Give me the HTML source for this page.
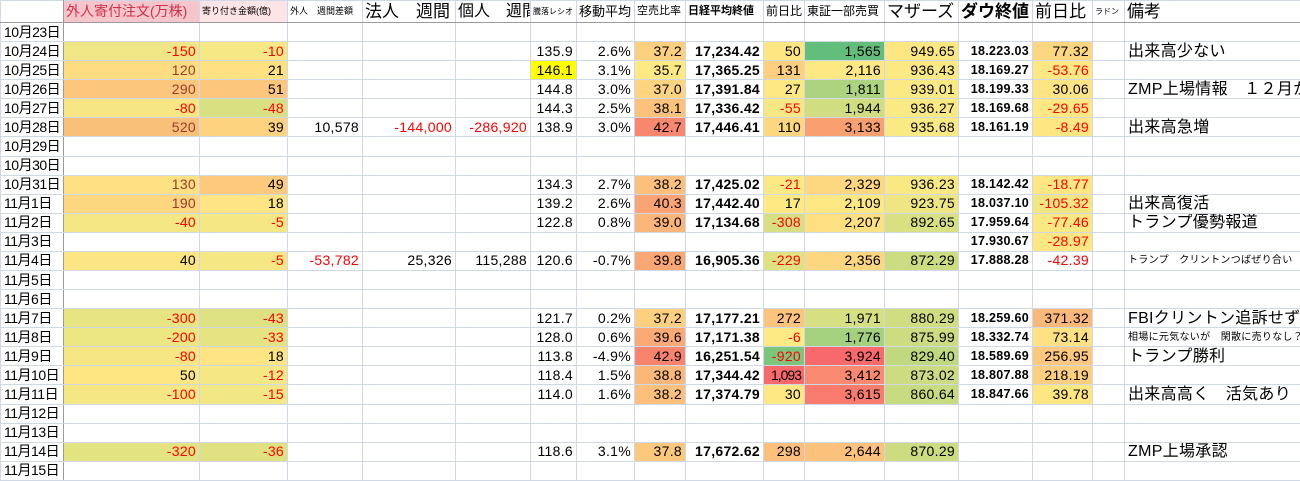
<!DOCTYPE html>
<html><head><meta charset="utf-8">
<style>
body{margin:0;background:#fff;width:1300px;height:470px;overflow:hidden;font-family:"Liberation Sans","Noto Sans CJK JP",sans-serif;}
table{border-collapse:collapse;table-layout:fixed;position:absolute;left:0;top:0;width:1300px;}
td{box-sizing:border-box;border:1px solid #d0d7e5;height:19.08px;padding:0 3px;font-size:14px;text-align:right;white-space:nowrap;overflow:hidden;color:#000;line-height:17px;letter-spacing:0.3px}
tr.h td{height:22px;border-bottom:1px solid #9b9b9b;text-align:left;padding:0 2px;letter-spacing:0}
td.d{text-align:left;border-right:1px solid #9b9b9b;padding-left:3px;letter-spacing:-0.5px}
td.r{color:#ff0000}
td.br{color:#9c3a2a}
td.b{font-weight:bold}
td.m{font-weight:bold;font-size:12.5px}
td.t{text-align:left;font-size:16px;padding-left:3px}
td.s{text-align:left;font-size:10px;padding-left:3px}
</style></head><body>
<table>
<colgroup><col style="width:63px"><col style="width:136px"><col style="width:88px"><col style="width:75px"><col style="width:93px"><col style="width:75px"><col style="width:46px"><col style="width:58px"><col style="width:51px"><col style="width:78px"><col style="width:41px"><col style="width:80px"><col style="width:74px"><col style="width:74px"><col style="width:60px"><col style="width:32px"><col style="width:176px"></colgroup>
<tr class="h"><td class="d"></td><td style="background:#f4c6cc;color:#d03048;font-size:14px">外人寄付注文(万株)</td><td style="background:#fde4e7;font-size:9px">寄り付き金額(億)</td><td style="font-size:9px">外人　週間差額</td><td style="font-size:17px">法人　週間</td><td style="font-size:16px">個人　週間</td><td style="font-size:8px">騰落レシオ</td><td style="font-size:13px">移動平均</td><td style="font-size:11px">空売比率</td><td style="font-size:11px;font-weight:bold">日経平均終値</td><td style="font-size:12px">前日比</td><td style="font-size:12px">東証一部売買</td><td style="font-size:17px">マザーズ</td><td style="font-size:17px;font-weight:bold">ダウ終値</td><td style="font-size:17px">前日比</td><td style="font-size:8px">ラドン</td><td style="font-size:17px">備考</td></tr>
<tr><td class="d">10月23日</td><td></td><td></td><td></td><td></td><td></td><td></td><td></td><td></td><td></td><td></td><td></td><td></td><td></td><td></td><td></td><td></td></tr>
<tr><td class="d">10月24日</td><td class="r" style="background:#f0e685">-150</td><td class="r" style="background:#f6e884">-10</td><td></td><td></td><td></td><td>135.9</td><td>2.6%</td><td style="background:#fdd07f">37.2</td><td class="b">17,234.42</td><td style="background:#fee683">50</td><td style="background:#63be7b">1,565</td><td style="background:#fde783">949.65</td><td class="m">18.223.03</td><td style="background:#fdd780">77.32</td><td></td><td class="t">出来高少ない</td></tr>
<tr><td class="d">10月25日</td><td class="br" style="background:#fedc81">120</td><td style="background:#fee282">21</td><td></td><td></td><td></td><td style="background:#ffff00">146.1</td><td>3.1%</td><td style="background:#fee983">35.7</td><td class="b">17,365.25</td><td style="background:#fcd07f">131</td><td style="background:#fee883">2,116</td><td style="background:#fbe983">936.43</td><td class="m">18.169.27</td><td class="r" style="background:#fde883">-53.76</td><td></td><td></td></tr>
<tr><td class="d">10月26日</td><td class="br" style="background:#fcc77d">290</td><td style="background:#fcc77d">51</td><td></td><td></td><td></td><td>144.8</td><td>3.0%</td><td style="background:#fed481">37.0</td><td class="b">17,391.84</td><td style="background:#fee883">27</td><td style="background:#acd37f">1,811</td><td style="background:#fbe983">939.01</td><td class="m">18.199.33</td><td style="background:#fee483">30.06</td><td></td><td class="t">ZMP上場情報　１２月か</td></tr>
<tr><td class="d">10月27日</td><td class="r" style="background:#f7e784">-80</td><td class="r" style="background:#d9e082">-48</td><td></td><td></td><td></td><td>144.3</td><td>2.5%</td><td style="background:#fcc27c">38.1</td><td class="b">17,336.42</td><td class="r" style="background:#f5e784">-55</td><td style="background:#d0dd81">1,944</td><td style="background:#fbe983">936.27</td><td class="m">18.169.68</td><td class="r" style="background:#fee883">-29.65</td><td></td><td></td></tr>
<tr><td class="d">10月28日</td><td class="br" style="background:#f9c07a">520</td><td style="background:#fed380">39</td><td>10,578</td><td class="r">-144,000</td><td class="r">-286,920</td><td>138.9</td><td>3.0%</td><td style="background:#f8876f">42.7</td><td class="b">17,446.41</td><td style="background:#fdd680">110</td><td style="background:#f9a070">3,133</td><td style="background:#fbe983">935.68</td><td class="m">18.161.19</td><td class="r" style="background:#fee683">-8.49</td><td></td><td class="t">出来高急増</td></tr>
<tr><td class="d">10月29日</td><td></td><td></td><td></td><td></td><td></td><td></td><td></td><td></td><td></td><td></td><td></td><td></td><td></td><td></td><td></td><td></td></tr>
<tr><td class="d">10月30日</td><td></td><td></td><td></td><td></td><td></td><td></td><td></td><td></td><td></td><td></td><td></td><td></td><td></td><td></td><td></td><td></td></tr>
<tr><td class="d">10月31日</td><td class="br" style="background:#fee182">130</td><td style="background:#fdca7d">49</td><td></td><td></td><td></td><td>134.3</td><td>2.7%</td><td style="background:#fcc07c">38.2</td><td class="b">17,425.02</td><td class="r" style="background:#fbe983">-21</td><td style="background:#fed880">2,329</td><td style="background:#f9e983">936.23</td><td class="m">18.142.42</td><td class="r" style="background:#fee683">-18.77</td><td></td><td></td></tr>
<tr><td class="d">11月1日</td><td class="br" style="background:#fdd680">190</td><td style="background:#fee483">18</td><td></td><td></td><td></td><td>139.2</td><td>2.6%</td><td style="background:#faa375">40.3</td><td class="b">17,442.40</td><td style="background:#fee983">17</td><td style="background:#fee883">2,109</td><td style="background:#eee683">923.75</td><td class="m">18.037.10</td><td class="r" style="background:#f2e683">-105.32</td><td></td><td class="t">出来高復活</td></tr>
<tr><td class="d">11月2日</td><td class="r" style="background:#f5e784">-40</td><td class="r" style="background:#f5e784">-5</td><td></td><td></td><td></td><td>122.8</td><td>0.8%</td><td style="background:#fbb479">39.0</td><td class="b">17,134.68</td><td class="r" style="background:#d6df81">-308</td><td style="background:#fde082">2,207</td><td style="background:#d8e082">892.65</td><td class="m">17.959.64</td><td class="r" style="background:#fae983">-77.46</td><td></td><td class="t">トランプ優勢報道</td></tr>
<tr><td class="d">11月3日</td><td></td><td></td><td></td><td></td><td></td><td></td><td></td><td></td><td></td><td></td><td></td><td></td><td class="m">17.930.67</td><td class="r" style="background:#fee783">-28.97</td><td></td><td></td></tr>
<tr><td class="d">11月4日</td><td style="background:#fbe683">40</td><td class="r" style="background:#f5e784">-5</td><td class="r">-53,782</td><td>25,326</td><td>115,288</td><td>120.6</td><td>-0.7%</td><td style="background:#faa776">39.8</td><td class="b">16,905.36</td><td class="r" style="background:#e0e282">-229</td><td style="background:#fdd680">2,356</td><td style="background:#cbdc81">872.29</td><td class="m">17.888.28</td><td class="r">-42.39</td><td></td><td class="s">トランプ　クリントンつばぜり合い</td></tr>
<tr><td class="d">11月5日</td><td></td><td></td><td></td><td></td><td></td><td></td><td></td><td></td><td></td><td></td><td></td><td></td><td></td><td></td><td></td><td></td></tr>
<tr><td class="d">11月6日</td><td></td><td></td><td></td><td></td><td></td><td></td><td></td><td></td><td></td><td></td><td></td><td></td><td></td><td></td><td></td><td></td></tr>
<tr><td class="d">11月7日</td><td class="r" style="background:#e6e483">-300</td><td class="r" style="background:#dde182">-43</td><td></td><td></td><td></td><td>121.7</td><td>0.2%</td><td style="background:#fdd07f">37.2</td><td class="b">17,177.21</td><td style="background:#fcc47c">272</td><td style="background:#d6df81">1,971</td><td style="background:#d0dd81">880.29</td><td class="m">18.259.60</td><td style="background:#fbb979">371.32</td><td></td><td class="t">FBIクリントン追訴せず</td></tr>
<tr><td class="d">11月8日</td><td class="r" style="background:#ece683">-200</td><td class="r" style="background:#e5e382">-33</td><td></td><td></td><td></td><td>128.0</td><td>0.6%</td><td style="background:#fbaa76">39.6</td><td class="b">17,171.38</td><td class="r" style="background:#fdea84">-6</td><td style="background:#a3d17e">1,776</td><td style="background:#cddc81">875.99</td><td class="m">18.332.74</td><td style="background:#fee182">73.14</td><td></td><td class="s">相場に元気ないが　閑散に売りなし？</td></tr>
<tr><td class="d">11月9日</td><td class="r" style="background:#f7e784">-80</td><td style="background:#fee483">18</td><td></td><td></td><td></td><td>113.8</td><td>-4.9%</td><td style="background:#f8846e">42.9</td><td class="b">16,251.54</td><td class="r" style="background:#7bc57d">-920</td><td style="background:#f8696b">3,924</td><td style="background:#c0d980">829.40</td><td class="m">18.589.69</td><td style="background:#fcc87d">256.95</td><td></td><td class="t">トランプ勝利</td></tr>
<tr><td class="d">11月10日</td><td style="background:#fee783">50</td><td class="r" style="background:#f4e784">-12</td><td></td><td></td><td></td><td>118.4</td><td>1.5%</td><td style="background:#fbb779">38.8</td><td class="b">17,344.42</td><td style="background:#f8696b;letter-spacing:-1px">1,093</td><td style="background:#f98970">3,412</td><td style="background:#cddc81">873.02</td><td class="m">18.807.88</td><td style="background:#fccf7f">218.19</td><td></td><td></td></tr>
<tr><td class="d">11月11日</td><td class="r" style="background:#f5e784">-100</td><td class="r" style="background:#f1e784">-15</td><td></td><td></td><td></td><td>114.0</td><td>1.6%</td><td style="background:#fcc07c">38.2</td><td class="b">17,374.79</td><td style="background:#fee883">30</td><td style="background:#f97b6e">3,615</td><td style="background:#c8db81">860.64</td><td class="m">18.847.66</td><td style="background:#fee683">39.78</td><td></td><td class="t">出来高高く　活気あり</td></tr>
<tr><td class="d">11月12日</td><td></td><td></td><td></td><td></td><td></td><td></td><td></td><td></td><td></td><td></td><td></td><td></td><td></td><td></td><td></td><td></td></tr>
<tr><td class="d">11月13日</td><td></td><td></td><td></td><td></td><td></td><td></td><td></td><td></td><td></td><td></td><td></td><td></td><td></td><td></td><td></td><td></td></tr>
<tr><td class="d">11月14日</td><td class="r" style="background:#e3e382">-320</td><td class="r" style="background:#e0e282">-36</td><td></td><td></td><td></td><td>118.6</td><td>3.1%</td><td style="background:#fcc87d">37.8</td><td class="b">17,672.62</td><td style="background:#fcc07c">298</td><td style="background:#fcc27c">2,644</td><td style="background:#cddc81">870.29</td><td></td><td></td><td></td><td class="t">ZMP上場承認</td></tr>
<tr><td class="d">11月15日</td><td></td><td></td><td></td><td></td><td></td><td></td><td></td><td></td><td></td><td></td><td></td><td></td><td></td><td></td><td></td><td></td></tr>
</table>
</body></html>
